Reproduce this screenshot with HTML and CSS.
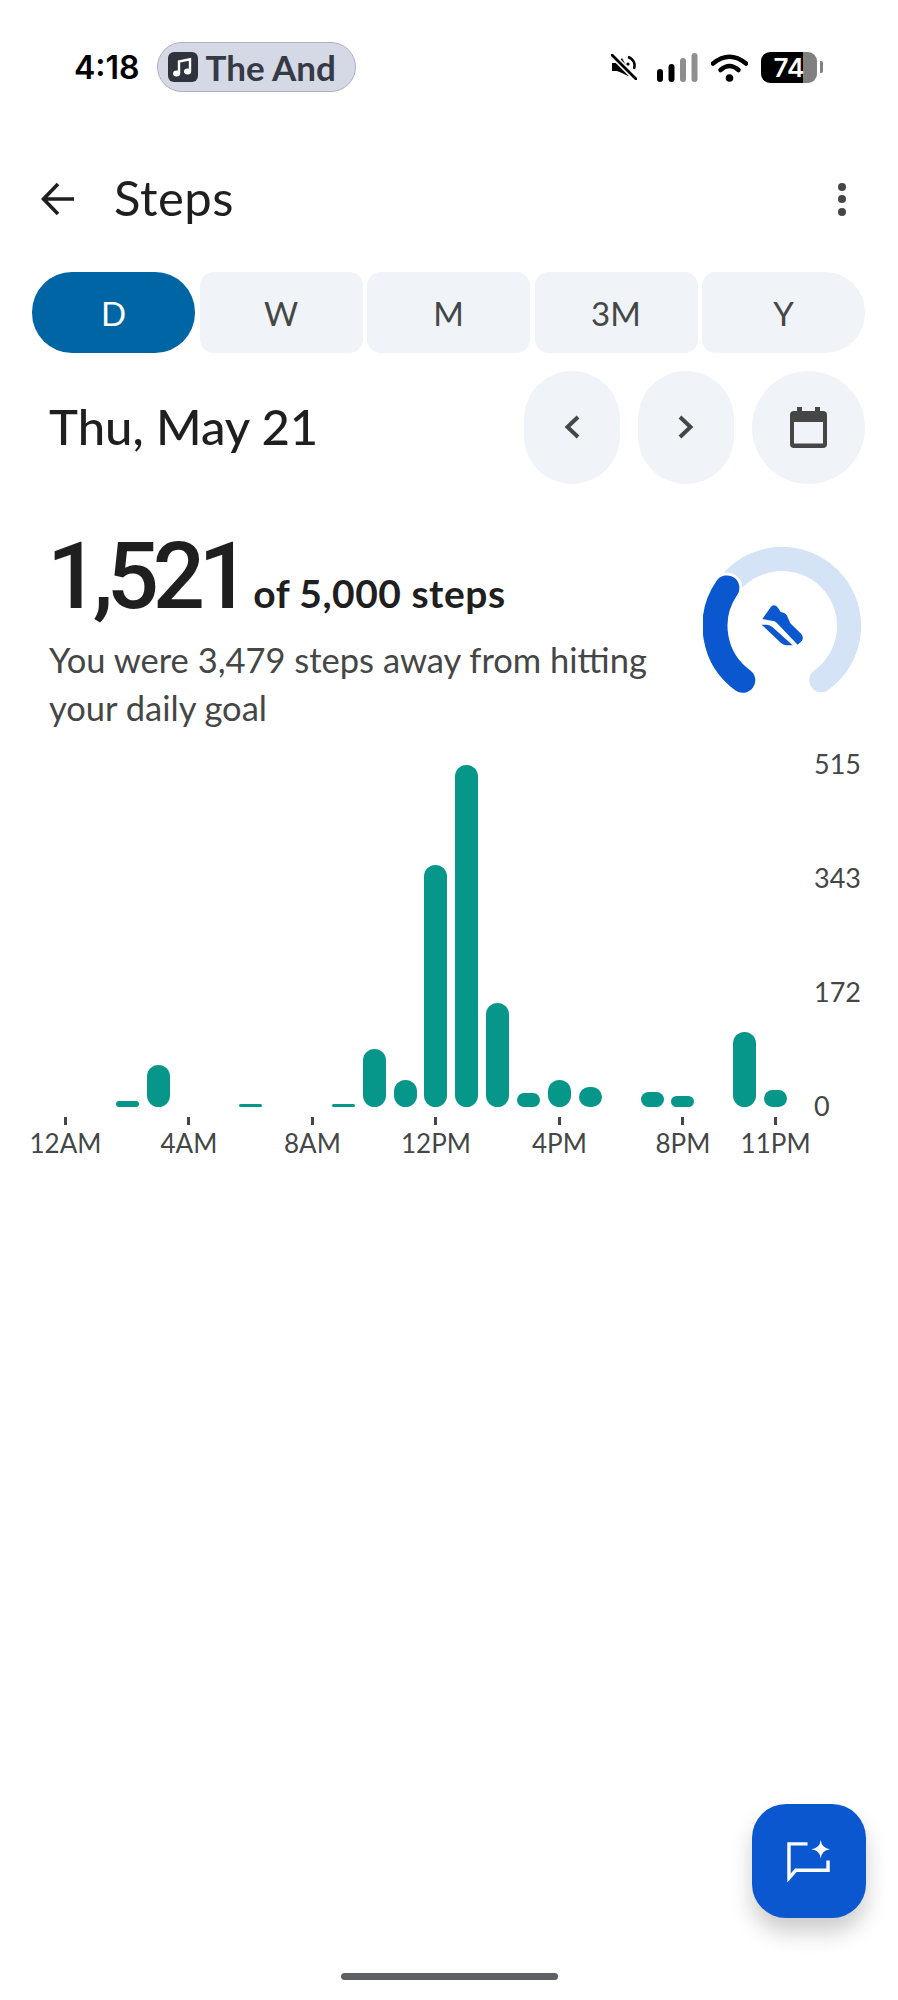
FILE: index.html
```html
<!DOCTYPE html>
<html lang="en">
<head>
    <meta charset="UTF-8">
    <meta name="viewport" content="width=device-width, initial-scale=1.0">
    <title>Steps</title>
    <link rel="stylesheet" href="styles.css">
</head>
<body>
    <div class="app">
        <div class="status">
            <div class="status-left">
                <span class="time">4:18</span>
                <span class="now-playing">
                    <svg class="music" viewBox="0 0 30 30">
                        <rect width="30" height="30" rx="6" fill="#2f333d"/>
                        <path d="M11 21V9.5l11-2.2V19" fill="none" stroke="#fff" stroke-width="2.4"/>
                        <ellipse cx="8.6" cy="21.5" rx="3.6" ry="3" fill="#fff"/>
                        <ellipse cx="19.6" cy="19.5" rx="3.6" ry="3" fill="#fff"/>
                    </svg>
                    The And
                </span>
            </div>
            <div class="status-right">
                <svg class="mute" viewBox="0 0 26 26">
                    <path d="M1 9h5l5-5 9 17-3 1-6-3-5-2H1z" fill="#000"/>
                    <path d="M17 3a9 9 0 0 1 6 12" fill="none" stroke="#000" stroke-width="2.4"/>
                    <circle cx="17" cy="10" r="1.6" fill="#000"/>
                    <path d="M1 1l24 24" stroke="#fff" stroke-width="6"/>
                    <path d="M1 1l24 24" stroke="#000" stroke-width="2.8" stroke-linecap="round"/>
                </svg>
                <svg class="signal" viewBox="0 0 41 29">
                    <rect x="0" y="16" width="6" height="13" rx="3" fill="#000"/>
                    <rect x="11.500" y="11" width="6" height="18" rx="3" fill="#000"/>
                    <rect x="23" y="5" width="6" height="24" rx="3" fill="#8e8e8e"/>
                    <rect x="34.500" y="0" width="6" height="29" rx="3" fill="#8e8e8e"/>
                </svg>
                <svg class="wifi" viewBox="0 0 37 29">
                    <path d="M2 10.500Q18.500 -3 35 10.500" fill="none" stroke="#000" stroke-width="4.500" stroke-linecap="round"/>
                    <path d="M9.500 17Q18.500 9 27.500 17" fill="none" stroke="#000" stroke-width="4.500" stroke-linecap="round"/>
                    <circle cx="18.500" cy="25" r="3.800" fill="#000"/>
                </svg>
                <span class="battery">74</span>
                <span class="battery-nub"></span>
            </div>
        </div>

        <div class="topbar">
            <svg class="back" viewBox="0 0 34 34">
                <path d="M33 17H3M17 2L2.500 17 17 32" fill="none" stroke="#1f1f1f" stroke-width="3.600"/>
            </svg>
            <h1>Steps</h1>
            <div class="more"><i></i><i></i><i></i></div>
        </div>

        <div class="tabs">
            <div class="tab active">D</div>
            <div class="tab">W</div>
            <div class="tab">M</div>
            <div class="tab">3M</div>
            <div class="tab">Y</div>
        </div>

        <div class="date-row">
            <div class="date">Thu, May 21</div>
            <div class="date-btn pager">
                <svg viewBox="0 0 16 24" class="chev"><path d="M14 2L3.500 12 14 22" fill="none" stroke="#444746" stroke-width="4"/></svg>
            </div>
            <div class="date-btn pager">
                <svg viewBox="0 0 16 24" class="chev"><path d="M2 2l10.500 10L2 22" fill="none" stroke="#444746" stroke-width="4"/></svg>
            </div>
            <div class="date-btn cal">
                <svg viewBox="0 0 37 41" class="cal-icon">
                    <rect x="7" y="0" width="5" height="7" fill="#444746"/>
                    <rect x="25" y="0" width="5" height="7" fill="#444746"/>
                    <path fill-rule="evenodd" d="M4 4h29a4 4 0 0 1 4 4v29a4 4 0 0 1-4 4H4a4 4 0 0 1-4-4V8a4 4 0 0 1 4-4zM4 15v21.500h29V15z" fill="#444746"/>
                </svg>
            </div>
        </div>

        <div class="summary">
            <div class="summary-text">
                <div class="count"><span class="count-num">1,521</span><span class="count-of">of 5,000 steps</span></div>
                <p class="note">You were 3,479 steps away from hitting your daily goal</p>
            </div>
            <svg class="ring" viewBox="0 0 158 146">
                <path d="M23.900 40.900A67 67 0 1 1 118.200 133.300" fill="none" stroke="#d5e3f7" stroke-width="24" stroke-linecap="round"/>
                <path d="M39.800 133.300A67 67 0 0 1 23.900 40.900" fill="none" stroke="#fff" stroke-width="31" stroke-linecap="round"/>
                <path d="M39.800 133.300A67 67 0 0 1 23.900 40.900" fill="none" stroke="#0b57d0" stroke-width="25" stroke-linecap="round"/>
                <g transform="translate(-43 -27) scale(.3333)" fill="#0b57d0">
                    <path d="M307 297L333 260Q345 250 355 265L362 276Q375 278 380 285L391 310L424 342Q432 352 426 362L413 374L350 308Q345 302 335 302Z"/>
                    <path d="M305 314H320Q330 314 338 322L398 376H380Q372 376 364 370Z"/>
                </g>
            </svg>
        </div>

        <div class="chart">
            <div class="plot">
                <div class="bars">
                    <div class="bar" style="grid-column:3;height:6px"></div>
                    <div class="bar" style="grid-column:4;height:42px"></div>
                    <div class="bar" style="grid-column:7;height:3px"></div>
                    <div class="bar" style="grid-column:10;height:3px"></div>
                    <div class="bar" style="grid-column:11;height:58px"></div>
                    <div class="bar" style="grid-column:12;height:27px"></div>
                    <div class="bar" style="grid-column:13;height:242px"></div>
                    <div class="bar" style="grid-column:14;height:342px"></div>
                    <div class="bar" style="grid-column:15;height:104px"></div>
                    <div class="bar" style="grid-column:16;height:14px"></div>
                    <div class="bar" style="grid-column:17;height:27px"></div>
                    <div class="bar" style="grid-column:18;height:20px"></div>
                    <div class="bar" style="grid-column:20;height:15px"></div>
                    <div class="bar" style="grid-column:21;height:11px"></div>
                    <div class="bar" style="grid-column:23;height:75px"></div>
                    <div class="bar" style="grid-column:24;height:17px"></div>
                </div>
                <div class="ticks">
                    <div class="tick" style="grid-column:1"><i></i><span>12AM</span></div>
                    <div class="tick" style="grid-column:5"><i></i><span>4AM</span></div>
                    <div class="tick" style="grid-column:9"><i></i><span>8AM</span></div>
                    <div class="tick" style="grid-column:13"><i></i><span>12PM</span></div>
                    <div class="tick" style="grid-column:17"><i></i><span>4PM</span></div>
                    <div class="tick" style="grid-column:21"><i></i><span>8PM</span></div>
                    <div class="tick" style="grid-column:24"><i></i><span>11PM</span></div>
                </div>
            </div>
            <div class="y-axis">
                <span>515</span>
                <span>343</span>
                <span>172</span>
                <span>0</span>
            </div>
        </div>

        <div class="fab-row">
            <div class="fab">
                <svg viewBox="1 0 45 43" class="fab-icon">
                    <path d="M22 4H3v35l7-8h33V21" fill="none" stroke="#fff" stroke-width="3.500"/>
                    <path d="M35.500 0Q36.500 8.500 45 9.500 36.500 10.500 35.500 19 34.500 10.500 26 9.500 34.500 8.500 35.500 0Z" fill="#fff"/>
                </svg>
            </div>
        </div>
        <div class="home-bar"></div>
    </div>
</body>
</html>
```

FILE: styles.css
```css
* {
    box-sizing: border-box;
}
body {
    margin: 0;
    background-color: #fff;
    font-family: Lato, "Open Sans", sans-serif;
    color: #1f1f1f;
}
.app {
    width: 898px;
    height: 2000px;
    display: flex;
    flex-direction: column;
    background-color: #fff;
}

/* status bar */
.status {
    height: 134px;
    display: flex;
    align-items: center;
    justify-content: space-between;
    padding: 0 75px 0 74px;
}
.status-left {
    display: flex;
    align-items: center;
    gap: 17px;
}
.time {
    font-family: Inter, sans-serif;
    font-size: 32px;
    font-weight: 600;
    color: #000;
}
.now-playing {
    display: flex;
    align-items: center;
    gap: 8px;
    height: 50px;
    width: 199px;
    padding-left: 10px;
    background-color: #d5d8e5;
    border: 1.5px solid #aeb1bf;
    border-radius: 25px;
    font-size: 35px;
    font-weight: 700;
    color: #363a45;
}
.music {
    width: 30px;
    height: 30px;
}
.status-right {
    display: flex;
    align-items: center;
}
.mute {
    width: 26px;
    height: 26px;
    margin-right: 20px;
}
.signal {
    width: 41px;
    height: 29px;
    margin-right: 13px;
}
.wifi {
    width: 37px;
    height: 29px;
    margin-right: 13px;
}
.battery {
    width: 56px;
    height: 31px;
    border-radius: 9px;
    background: linear-gradient(90deg, #000 75%, #808080 75%);
    color: #fff;
    font-family: Inter, sans-serif;
    font-size: 26px;
    font-weight: 600;
    line-height: 31px;
    text-align: center;
}
.battery-nub {
    width: 3px;
    height: 12px;
    margin-left: 3px;
    background-color: #808080;
    border-radius: 0 2px 2px 0;
}

/* top bar */
.topbar {
    height: 130px;
    display: flex;
    align-items: center;
    padding: 0 52px 0 41px;
}
.back {
    width: 34px;
    height: 34px;
}
h1 {
    flex: 1;
    margin: 0 0 5px 39px;
    font-size: 49px;
    font-weight: 400;
    letter-spacing: 0.5px;
}
.more {
    display: flex;
    flex-direction: column;
    gap: 4.5px;
}
.more i {
    width: 8px;
    height: 8px;
    border-radius: 50%;
    background-color: #444746;
}

/* range tabs */
.tabs {
    display: grid;
    grid-template-columns: repeat(5, 1fr);
    gap: 4.5px;
    height: 81px;
    margin: 8px 33px 0 32px;
}
.tab {
    display: flex;
    align-items: center;
    justify-content: center;
    background-color: #f0f3f8;
    border-radius: 14px;
    font-size: 33px;
    color: #444746;
}
.tab:first-child {
    border-radius: 40px;
}
.tab:last-child {
    border-radius: 14px 40px 40px 14px;
}
.tab.active {
    background-color: #0065a5;
    color: #fff;
}

/* date row */
.date-row {
    display: flex;
    align-items: center;
    gap: 18px;
    height: 114px;
    margin-top: 17px;
    padding: 0 33px 0 49px;
}
.date {
    flex: 1;
    margin-bottom: 2px;
    font-size: 49px;
    font-weight: 500;
}
.date-btn {
    display: flex;
    align-items: center;
    justify-content: center;
    height: 113px;
    background-color: #f0f3f8;
    border-radius: 50%;
}
.pager {
    width: 96px;
    border-radius: 48px;
}
.cal {
    width: 113px;
}
.chev {
    width: 16px;
    height: 24px;
}
.cal-icon {
    width: 37px;
    height: 41px;
}

/* summary */
.summary {
    display: flex;
    justify-content: space-between;
    height: 281px;
    padding: 0 37px 0 49px;
}
.count {
    display: flex;
    align-items: baseline;
    gap: 9px;
    margin-top: 41px;
}
.count-num {
    margin-left: -2px;
    font-family: Roboto, sans-serif;
    font-size: 92px;
    font-weight: 500;
    line-height: 104px;
    letter-spacing: -6.5px;
}
.count-of {
    font-size: 39px;
    font-weight: 700;
    letter-spacing: 0.5px;
}
.note {
    width: 610px;
    margin: 7px 0 0;
    font-size: 34.5px;
    line-height: 48px;
    color: #444746;
}
.ring {
    width: 158px;
    height: 146px;
    margin-top: 63px;
}

/* chart */
.chart {
    display: flex;
    padding-left: 50px;
}
.plot {
    width: 741px;
}
.bars,
.ticks {
    display: grid;
    grid-template-columns: repeat(24, minmax(0, 1fr));
}
.bars {
    height: 342px;
    align-items: end;
    justify-items: center;
}
.bar {
    width: 23px;
    background-color: #07968a;
    border-radius: 12px;
}
.ticks {
    margin-top: 10px;
}
.tick {
    display: flex;
    flex-direction: column;
    align-items: center;
}
.tick i {
    flex: none;
    width: 3px;
    height: 8px;
    background-color: #444746;
}
.tick span {
    font-size: 26px;
    line-height: 36px;
    white-space: nowrap;
    color: #444746;
}
.y-axis {
    display: flex;
    flex-direction: column;
    justify-content: space-between;
    height: 378px;
    margin-top: -19px;
    padding-left: 23px;
    font-size: 27px;
    line-height: 36px;
    color: #444746;
}

/* floating button and home bar */
.fab-row {
    display: flex;
    justify-content: flex-end;
    margin-top: auto;
    padding-right: 32px;
}
.fab {
    display: flex;
    align-items: center;
    justify-content: center;
    width: 114px;
    height: 114px;
    background-color: #0b57d0;
    border-radius: 34px;
    box-shadow: 0 14px 22px rgba(0, 0, 0, 0.2);
}
.fab-icon {
    width: 44px;
    height: 42px;
}
.home-bar {
    width: 217px;
    height: 7px;
    margin: 55px auto 20px;
    background-color: #5f6061;
    border-radius: 4px;
}
```
